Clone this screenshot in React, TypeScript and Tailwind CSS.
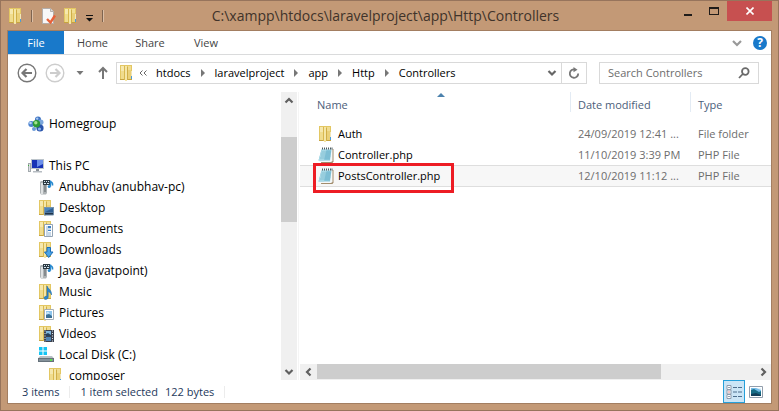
import React from "react";

type IconProps = { className?: string };

function FolderIcon({ className = "size-4", children }: IconProps & { children?: React.ReactNode }) {
  return (
    <svg viewBox="0 0 16 16" className={`shrink-0 ${className}`} shapeRendering={children ? "auto" : "crispEdges"} aria-hidden="true">
      <path d="M1 0h12v15H1z" fill="#e3c763" />
      <path d="M2 1h4v14H2z" fill="#f0dc8e" />
      <path d="M2 1h3v5H2z" fill="#f6e8ae" />
      <path d="M5 1h1v14H5z" fill="#d8b850" />
      <path d="M6 1h2v15H6z" fill="#f5e6a6" />
      <path d="M8 2h1v13H8z" fill="#cfae48" />
      <path d="M9 1h3v13H9z" fill="#ead078" />
      <path d="M9 1h3v4H9z" fill="#f1dd92" />
      <path d="M1 14h4v1H1zM9 14h4v1H9z" fill="#c6a440" />
      {children ?? (
        <>
          <path d="M12 6h1v5h-1z" fill="#f2e6b8" />
          <path d="M12 11h1v3h-1z" fill="#4a9cdb" />
        </>
      )}
    </svg>
  );
}

function DesktopFolder() {
  return (
    <FolderIcon>
      <path d="M6 7h10v8l-1 .5H6z" fill="#7592ad" />
      <path d="M7 8h8v4.500H7z" fill="#2f5f93" />
      <path d="M7 8h8L7 12z" fill="#4c86bd" />
      <path d="M7 13h8v1.500H7z" fill="#1f354c" />
    </FolderIcon>
  );
}
function DocumentsFolder() {
  return (
    <FolderIcon>
      <path d="M6.500 3.500h8v12h-8z" fill="#fff" stroke="#93a3b3" />
      <path d="M8 6h2M8 8h5M8 10h2M8 12h5M8 14h5" stroke="#8fb0cf" />
      <path d="M10 5h3v2h-3zM10 9h3v1h-3z" fill="#3b7fc4" />
    </FolderIcon>
  );
}
function DownloadsFolder() {
  return (
    <FolderIcon>
      <path d="M9 5.500h3.500V10H15l-4.300 5.500L6.500 10H9z" fill="#4aa3e6" stroke="#1c6fb8" />
    </FolderIcon>
  );
}
function MusicFolder() {
  return (
    <FolderIcon>
      <path d="M9 2c1 3 5 4 4.500 9-.6-2-2-3-3.300-3.500V13c0 3-4.200 3-4.200 1 0-1.500 2-2 3-1.500z" fill="#2c86cf" stroke="#1b68aa" strokeWidth=".5" />
    </FolderIcon>
  );
}
function PicturesFolder() {
  return (
    <FolderIcon>
      <path d="M6.500 4.500h9v10h-9z" fill="#fff" stroke="#a6aeb6" />
      <path d="M8 6h6v7H8z" fill="#8fc6ee" />
      <path d="M8 10l3-1 3 2v2H8z" fill="#3a6f94" />
      <path d="M8 8l2-1 2 1.500H8z" fill="#e9f5fc" />
    </FolderIcon>
  );
}
function VideosFolder() {
  return (
    <FolderIcon>
      <path d="M6 4h10v12H6z" fill="#3b4250" />
      <path d="M8 5h5v5H8z" fill="#7db4dc" />
      <path d="M8 11h5v4H8z" fill="#4f83b4" />
      <path d="M8 8l2-1 3 2v1H8z" fill="#23405e" />
      <path d="M7 4.500v11M14.500 4.500v11" stroke="#dfe4ea" strokeDasharray="1 1.500" />
    </FolderIcon>
  );
}
function HomegroupIcon() {
  return (
    <svg viewBox="0 0 16 16" className="size-4 shrink-0" aria-hidden="true">
      <circle cx="3.300" cy="8" r="3" fill="#4d83cf" />
      <circle cx="2.500" cy="7" r="1.300" fill="#b8d5f4" />
      <circle cx="10" cy="3.500" r="3" fill="#3f74c3" />
      <circle cx="9.200" cy="2.600" r="1.200" fill="#a8cbf0" />
      <circle cx="12.700" cy="6.200" r="2.800" fill="#7ba6dc" />
      <circle cx="12" cy="12" r="3.600" fill="#2a54ab" />
      <circle cx="11.500" cy="13" r="1.600" fill="#8ab4ea" />
      <circle cx="6" cy="13" r="2" fill="#6b9bd8" />
      <circle cx="8.500" cy="7.800" r="3.700" fill="#2d9a37" />
      <circle cx="7.800" cy="6.800" r="1.700" fill="#a4e38e" />
    </svg>
  );
}
function ComputerIcon() {
  return (
    <svg viewBox="0 0 16 16" className="size-4 shrink-0" aria-hidden="true">
      <path d="M0 5h3v9H0z" fill="#a3a9ad" />
      <path d="M1 6h1v7H1z" fill="#dde2e4" />
      <path d="M0 7h1v1H0z" fill="#3cae38" />
      <path d="M3 1h13v10H3z" fill="#bcc4cb" />
      <path d="M4 2h11v8H4z" fill="#1732b6" />
      <path d="M9 2h6v4L9 9z" fill="#6b8fea" />
      <path d="M8 11h3v2H8z" fill="#888f96" />
      <path d="M5 13h9v1.500H5z" fill="#b6bcc2" />
    </svg>
  );
}
function MediaDeviceIcon() {
  return (
    <svg viewBox="0 0 16 16" className="size-4 shrink-0" aria-hidden="true">
      <path d="M2 3l1-1h4l2 1v11l-1 1.500H3L2 14z" fill="#aeb3b5" />
      <path d="M3 4h2v11H3z" fill="#dfe2e3" />
      <path d="M6 6h2v7H6z" fill="#858b8e" />
      <path d="M5 1h7v5H5z" fill="#2d3a42" />
      <path d="M6 2h1v1H6zM8 2h1v1H8zM10 2h1v1h-1zM6 4h2v1H6zM9 4h2v1H9z" fill="#d6e7f2" />
      <path d="M12.500 1.500v6M12.500 2.500c2 1 2.500 2 2 4" fill="none" stroke="#2789cf" strokeWidth="1.400" />
      <circle cx="11.200" cy="7.500" r="1.500" fill="#2789cf" />
    </svg>
  );
}
function DiskIcon() {
  return (
    <svg viewBox="0 0 16 16" className="size-4 shrink-0" aria-hidden="true">
      <path d="M1 0h3.500v3.500H1zM5.500 0H9v3.500H5.500zM1 4.500h3.500V8H1zM5.500 4.500H9V8H5.500z" fill="#15c4f4" />
      <path d="M2 9h12l2 2.500H0z" fill="#b9c0c5" />
      <path d="M0 11h16v4H0z" fill="#66727b" />
      <path d="M1 12h14v2H1z" fill="#84919a" />
      <path d="M12 12h2v2h-2z" fill="#59e04a" />
    </svg>
  );
}
function NotepadIcon() {
  return (
    <svg viewBox="0 0 16 16" className="size-4 shrink-0" aria-hidden="true">
      <path d="M5 2h10.500v12.500l-1 1.500H3z" fill="#a28c6c" />
      <path d="M4 1.500h10.500V14L13 15H1z" fill="#f4f8f9" />
      <path d="M3.500 2.500h10l-1.500 11H.500z" fill="#86c5da" />
      <path d="M3.500 2.500h5L6 13.500H.500z" fill="#a9d9e6" />
      <path d="M3.500 5h9.500M3 7h9.500M3 9h9.500M2 11h10" stroke="#62a9c2" strokeWidth=".5" />
      <path d="M4.500 .500v2M6.500 .500v2M8.500 .500v2M10.500 .500v2M12.500 .500v2M14 .500v2" stroke="#39474e" strokeWidth=".9" />
    </svg>
  );
}
function PropertiesIcon() {
  return (
    <svg viewBox="0 0 16 16" className="size-4 shrink-0" aria-hidden="true">
      <path d="M1.500.500h8l3 3v12h-11z" fill="#f7f7f7" stroke="#b3aeab" />
      <path d="M9.500.500v3h3" fill="#dcdcdc" stroke="#b3aeab" />
      <path d="M6 11l3.500 3.500 4.500-7" fill="none" stroke="#e8623a" strokeWidth="2.400" />
    </svg>
  );
}

function Chevron({ d, className = "size-4" }: { d: string; className?: string }) {
  return (
    <svg viewBox="0 0 16 16" className={`shrink-0 ${className}`} aria-hidden="true">
      <path d={d} fill="none" stroke="currentColor" strokeWidth="2.200" />
    </svg>
  );
}

function NavArrow({ flip = false }: { flip?: boolean }) {
  return (
    <svg viewBox="0 0 20 20" className="size-5" fill="none" stroke="currentColor" aria-hidden="true">
      <circle cx="10" cy="10" r="8.800" strokeWidth="1.400" />
      <path d={flip ? "M5 10h9M10.500 6l4 4-4 4" : "M15 10H6M9.500 6l-4 4 4 4"} strokeWidth="2.200" />
    </svg>
  );
}

const crumbs = ["htdocs", "laravelproject", "app", "Http", "Controllers"];

const places = [
  { name: "Anubhav (anubhav-pc)", icon: <MediaDeviceIcon /> },
  { name: "Desktop", icon: <DesktopFolder /> },
  { name: "Documents", icon: <DocumentsFolder /> },
  { name: "Downloads", icon: <DownloadsFolder /> },
  { name: "Java (javatpoint)", icon: <MediaDeviceIcon /> },
  { name: "Music", icon: <MusicFolder /> },
  { name: "Pictures", icon: <PicturesFolder /> },
  { name: "Videos", icon: <VideosFolder /> },
  { name: "Local Disk (C:)", icon: <DiskIcon /> },
];

const files = [
  { name: "Auth", date: "24/09/2019 12:41 ...", type: "File folder", folder: true },
  { name: "Controller.php", date: "11/10/2019 3:39 PM", type: "PHP File" },
  { name: "PostsController.php", date: "12/10/2019 11:12 ...", type: "PHP File", selected: true },
];

function TitleBar() {
  return (
    <header className="flex h-[29px] shrink-0 items-center">
      <div className="flex w-[104px] shrink-0 items-center pl-[7px]">
        <FolderIcon />
        <span className="ml-[7px] h-3 w-[2px] border-r border-[#dcbfa6] bg-[#7e6450]" />
        <button aria-label="Properties" className="ml-2"><PropertiesIcon /></button>
        <button aria-label="New folder" className="ml-[6px]"><FolderIcon /></button>
        <button aria-label="Customize toolbar" className="mt-1 ml-[7px]">
          <svg viewBox="0 0 8 8" className="size-2" aria-hidden="true"><path d="M0 1h7v1H0zM0 4h7L3.500 7.500z" fill="#111" /></svg>
        </button>
        <span className="ml-2 h-3 w-[2px] shrink-0 border-r border-[#dcbfa6] bg-[#7e6450]" />
      </div>
      <h1 className="flex-1 text-center text-[14px] leading-5 whitespace-nowrap text-[#40332a]">
        C:\xampp\htdocs\laravelproject\app\Http\Controllers
      </h1>
      <div className="flex w-[112px] shrink-0 self-stretch pr-[6px]">
        <div className="flex flex-1 justify-end">
          <button aria-label="Minimize" className="flex h-5 w-[26px] items-center justify-center">
            <svg viewBox="0 0 10 10" className="size-[10px]" aria-hidden="true"><path d="M1 8h8v2H1z" fill="#201c1a" /></svg>
          </button>
          <button aria-label="Maximize" className="flex h-5 w-[26px] items-center justify-center">
            <svg viewBox="0 0 10 10" className="size-[10px]" aria-hidden="true"><path d="M0 1h10v8H0zM1 3v5h8V3z" fill="#201c1a" fillRule="evenodd" /></svg>
          </button>
        </div>
        <button aria-label="Close" className="flex h-5 w-[45px] items-center justify-center bg-[#c75050]">
          <svg viewBox="0 0 8 8" className="size-2" aria-hidden="true"><path d="M.500.500l7 7M7.500.500l-7 7" stroke="#fff" strokeWidth="1.600" /></svg>
        </button>
      </div>
    </header>
  );
}

function Ribbon() {
  return (
    <nav className="flex h-6 shrink-0 items-stretch border-b border-[#dadbdc] text-[#444]">
      <button className="w-14 bg-[#1979ca] text-white">File</button>
      <button className="w-[57px]">Home</button>
      <button className="w-[58px]">Share</button>
      <button className="w-[54px]">View</button>
      <div className="ml-auto flex items-center gap-2 pr-1">
        <button aria-label="Expand ribbon" className="text-[#999]"><Chevron d="M4 6l4 4 4-4" /></button>
        <button aria-label="Help" className="flex size-[14px] items-center justify-center rounded-full bg-[#1979ca] text-[12px] font-bold text-white">?</button>
      </div>
    </nav>
  );
}

function AddressRow() {
  return (
    <div className="mb-px flex h-9 shrink-0 items-center pr-3 pl-[9px]">
      <button aria-label="Back" className="text-[#777]"><NavArrow /></button>
      <button aria-label="Forward" className="ml-2 text-[#cdcdcd]"><NavArrow flip /></button>
      <button aria-label="Recent locations" className="ml-[11px]">
        <svg viewBox="0 0 8 8" className="size-2" aria-hidden="true"><path d="M.500 2h7L4 6z" fill="#777" /></svg>
      </button>
      <button aria-label="Up" className="ml-[11px] text-[#777]">
        <svg viewBox="0 0 16 16" className="size-4" fill="none" stroke="currentColor" strokeWidth="2" aria-hidden="true"><path d="M8 14V3M4 7l4-4 4 4" /></svg>
      </button>
      <div className="ml-[5px] flex h-[22px] flex-1 items-center border border-[#d9d9d9] text-black">
        <FolderIcon className="ml-[2px] size-4" />
        <button aria-label="More folders" className="flex w-4 justify-center text-[#666]">
          <svg viewBox="0 0 8 6" className="h-[6px] w-2" fill="none" stroke="currentColor" aria-hidden="true"><path d="M3.500.500L1 3l2.500 2.500M7.500.500L5 3l2.500 2.500" /></svg>
        </button>
        <ol className="ml-[5px] flex items-center">
          {crumbs.map((crumb, i) => (
            <li key={crumb} className="flex items-center">
              {i > 0 && (
                <svg viewBox="0 0 24 8" className="h-2 w-6 shrink-0" aria-hidden="true"><path d="M10 0l4 4-4 4z" fill="#777" /></svg>
              )}
              <button>{crumb}</button>
            </li>
          ))}
        </ol>
        <button aria-label="Previous locations" className="ml-auto text-[#666]"><Chevron d="M4.500 6L8 9.500 11.500 6" /></button>
        <button aria-label="Refresh" className="ml-px flex h-full w-[25px] items-center justify-center border-l border-[#d9d9d9] text-[#777]">
          <svg viewBox="0 0 12 12" className="size-3" fill="none" stroke="currentColor" strokeWidth="1.800" aria-hidden="true">
            <path d="M7 2.500A4.200 4.200 0 1 0 10.200 6.500" /><path d="M5.500 0l4 2.700-4 2.600z" fill="currentColor" stroke="none" />
          </svg>
        </button>
      </div>
      <label className="ml-3 flex h-[22px] w-40 shrink-0 items-center border border-[#d9d9d9] px-2">
        <input aria-label="Search Controllers" placeholder="Search Controllers" className="min-w-0 flex-1 bg-transparent outline-none placeholder:text-[#6d6d6d]" />
        <svg viewBox="0 0 12 12" className="size-3 shrink-0" fill="none" stroke="#6a6a6a" strokeWidth="1.800" aria-hidden="true">
          <circle cx="7.300" cy="4.500" r="3.300" /><path d="M4.800 7L1 11" />
        </svg>
      </label>
    </div>
  );
}

function Sidebar() {
  return (
    <aside className="flex w-[291px] shrink-0 border-r border-[#f5f5f5]">
      <ul className="mt-[21px] flex-1 overflow-hidden text-[12px] leading-4 text-black">
        <li className="mb-[21px] flex h-[21px] items-center gap-[5px] pl-5"><HomegroupIcon />Homegroup</li>
        <li>
          <span className="flex h-[21px] items-center gap-[5px] pl-5"><ComputerIcon />This PC</span>
          <ul>
            {places.map((place) => (
              <li key={place.name} className="flex h-[21px] items-center gap-[5px] pl-[30px]">{place.icon}{place.name}</li>
            ))}
            <li className="flex h-[21px] items-center gap-[5px] pl-10"><FolderIcon />composer</li>
          </ul>
        </li>
      </ul>
      <div className="mr-px flex w-4 flex-col items-center bg-[#f0f0f0] text-[#606060]">
        <button aria-label="Scroll up" className="flex h-[17px] items-center"><Chevron d="M4.500 9.500L8 6l3.500 3.500" /></button>
        <div className="mt-7 h-[85px] w-full bg-[#cdcdcd]" />
        <button aria-label="Scroll down" className="mt-auto flex h-[17px] items-center"><Chevron d="M4.500 6L8 9.500 11.500 6" /></button>
      </div>
    </aside>
  );
}

function FileList() {
  return (
    <main className="ml-px flex min-w-0 flex-1 flex-col">
      <table className="w-full table-fixed text-left">
        <colgroup><col className="w-[271px]" /><col className="w-[120px]" /><col /></colgroup>
        <thead className="text-[#4c607a]">
          <tr className="h-[31px] align-top leading-[26px]">
            <th className="relative p-0 pl-[17px] font-normal">
              Name
              <svg viewBox="0 0 8 4" className="absolute top-px left-[137px] h-1 w-2" aria-hidden="true"><path d="M0 4l4-4 4 4z" fill="#4c82ad" /></svg>
              <span className="absolute top-0 right-0 h-5 w-px bg-[#e3ebf4]" />
            </th>
            <th className="relative p-0 pl-[7px] font-normal">Date modified<span className="absolute top-0 right-0 h-5 w-px bg-[#e3ebf4]" /></th>
            <th className="p-0 pl-[7px] font-normal">Type</th>
          </tr>
        </thead>
        <tbody className="text-[#6d6d6d]">
          {files.map((file) => (
            <tr key={file.name} className={file.selected ? "h-[22px] bg-[#f7f7f7] shadow-[inset_0_1px_#dedede,inset_0_-1px_#dedede]" : "h-[21px]"}>
              <td className="relative p-0 pl-[18px]">
                <span className="flex items-center gap-1 text-black">
                  {file.folder ? <FolderIcon /> : <NotepadIcon />}{file.name}
                </span>
                {file.selected && <span className="absolute -top-[2px] left-[13px] h-[30px] w-[141px] border-3 border-[#ed1c24]" />}
              </td>
              <td className="p-0 pl-[7px] whitespace-nowrap">{file.date}</td>
              <td className="p-0 pl-[7px] whitespace-nowrap">{file.type}</td>
            </tr>
          ))}
        </tbody>
      </table>
      <div className="mt-auto flex h-4 items-center bg-[#f0f0f0] text-[#606060]">
        <button aria-label="Scroll left" className="flex w-[17px] justify-center"><Chevron d="M9.500 4.500L6 8l3.500 3.500" /></button>
        <div className="mb-px h-[15px] w-[73%] bg-[#cdcdcd]" />
        <button aria-label="Scroll right" className="ml-auto flex w-[17px] justify-center"><Chevron d="M6.500 4.500L10 8l-3.500 3.500" /></button>
      </div>
    </main>
  );
}

function StatusBar() {
  return (
    <footer className="flex h-[23px] shrink-0 items-center pl-[14px] text-[#1e395b]">
      <span>3 items</span>
      <span className="mx-[10px] h-3 w-px bg-[#ececec]" />
      <span>1 item selected</span>
      <span className="ml-[7px]">122 bytes</span>
      <span className="ml-[10px] h-3 w-px bg-[#ececec]" />
      <div className="ml-auto flex items-center pr-1">
        <button aria-label="Details view" className="flex h-[23px] w-[22px] items-center justify-center border border-[#26a0da] bg-[#cbe5f6]">
          <svg viewBox="0 0 16 14" className="h-[14px] w-4" aria-hidden="true">
            <path d="M1 .500h4v4H1zM1 5h4v4H1zM1 9.500h4v4H1z" fill="#fff" stroke="#8d9bac" />
            <path d="M2.500 2h1v1h-1zM2.500 11h1v1h-1z" fill="#26476b" /><path d="M2.500 6.500h1v1h-1z" fill="#c92626" />
            <path d="M7 2.500h4M12 2.500h4M7 7h4M12 7h4M7 11.500h4M12 11.500h4" stroke="#4d6e8d" />
          </svg>
        </button>
        <button aria-label="Large icons view" className="flex w-[22px] justify-center">
          <svg viewBox="0 0 14 12" className="h-3 w-[14px]" aria-hidden="true">
            <path d="M.500.500h13v11H.500z" fill="#fff" stroke="#929eac" />
            <path d="M2 2h10v8H2z" fill="#75bce8" /><path d="M2 4l3-1 5 3 2-1v5H2z" fill="#176c85" /><path d="M2 8l5-1 5 2v1H2z" fill="#123e59" /><path d="M7 2l5 0v2z" fill="#e0f2fb" />
          </svg>
        </button>
      </div>
    </footer>
  );
}

export default function App() {
  return (
    <div className="flex h-screen min-h-80 flex-col border border-[#97745c] bg-[#c39976] font-['Open_Sans',sans-serif] text-[11px] leading-4">
      <TitleBar />
      <div className="mx-[6px] mb-[6px] flex min-h-0 flex-1 flex-col border border-[#a37e61] bg-white">
        <Ribbon />
        <AddressRow />
        <div className="flex min-h-0 flex-1"><Sidebar /><FileList /></div>
        <StatusBar />
      </div>
    </div>
  );
}
